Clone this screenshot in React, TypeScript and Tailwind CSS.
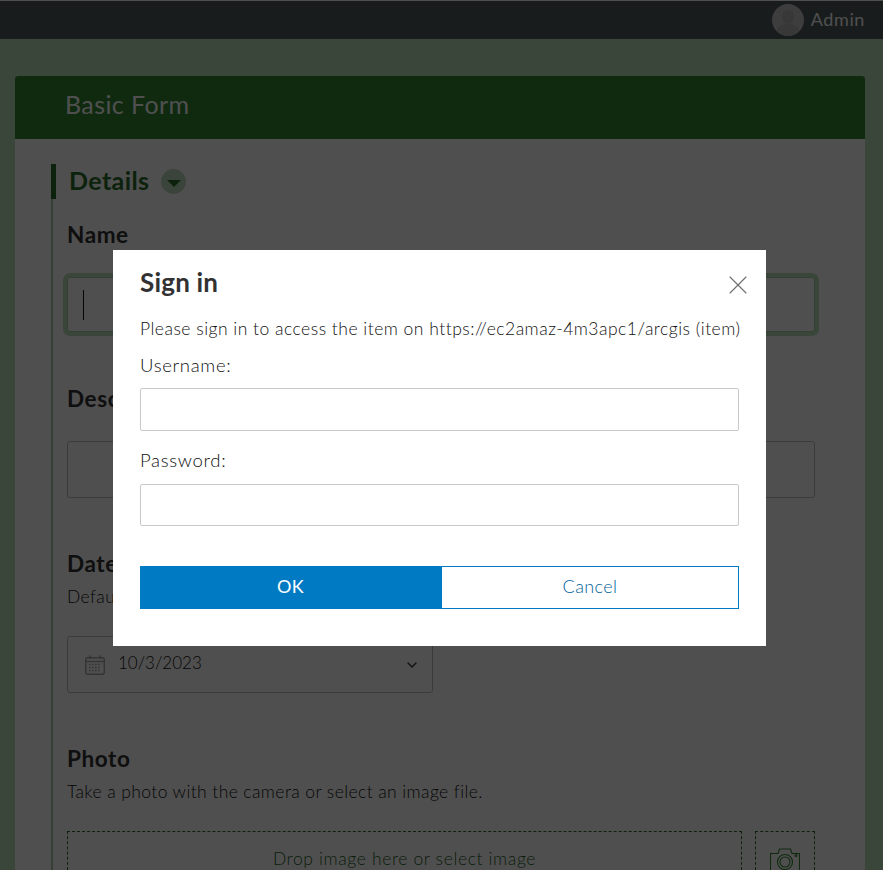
import { ChevronDown, X } from 'lucide-react';

const font = { fontFamily: 'Lato, "Open Sans", sans-serif' };

const CalendarIcon = () => (
  <svg width="20" height="20" viewBox="0 0 20 20" fill="none" className="text-[#a8a8a8]">
    <rect x="0.700" y="2.700" width="18.600" height="16.600" rx="2" stroke="currentColor" strokeWidth="1.400" />
    <path d="M.7 6.500h18.600" stroke="currentColor" strokeWidth="1.400" />
    <path d="M5 .5v3M15 .5v3" stroke="currentColor" strokeWidth="1.600" />
    <path d="M4 9.500h12M4 12.500h12M4 15.500h12" stroke="currentColor" strokeWidth="1.600" strokeDasharray="1.600 1.400" />
  </svg>
);

const CameraIcon = () => (
  <svg width="30" height="30" viewBox="0 0 30 30" fill="none" stroke="#308730" strokeWidth="1.100">
    <path d="M.5 30V5.500h7.500l1.500-4.500h11l1.500 4.500h7.500V30" />
    <circle cx="15" cy="14" r="7.500" />
    <circle cx="15" cy="14" r="5" />
    <circle cx="26" cy="7.500" r="1" />
  </svg>
);

const App = () => {
  return (
    <div className="relative h-[870px] w-[883px] overflow-hidden bg-[#bbe2bb] tracking-[0.4px]" style={font}>
      <header className="flex h-[39px] items-center justify-end border-t border-t-white bg-[#4d5a5a] pr-[18px]">
        <div className="flex items-center gap-[7px]">
          <div className="relative h-8 w-8 overflow-hidden rounded-full bg-[#c4c4c4]">
            <div className="absolute left-[10px] top-[6px] h-[14px] w-3 rounded-full bg-[#b4b4b4]" />
            <div className="absolute left-[4px] top-[20px] h-5 w-6 rounded-full bg-[#b4b4b4]" />
          </div>
          <span className="mb-[2px] text-[18px] tracking-[0.6px] text-white">Admin</span>
        </div>
      </header>

      <main className="pl-[15px] pr-[18px] pt-[37px]">
        <div className="overflow-hidden rounded-t-[3px] bg-white">
          <div className="flex h-[63px] items-center bg-[#308730] pb-[6px] pl-[50px] text-[25px] tracking-[0.4px] text-white">Basic Form</div>
          <div className="pl-[36px] pr-[50px] pt-[25px]">
            <div className="flex h-[35px] items-center border-l-[5px] border-l-[#2a6f2a] pl-[13px]">
              <span className="mb-[2px] text-[25px] font-bold leading-none tracking-[0.4px] text-[#2a6f2a]">Details</span>
              <span className="ml-[12px] flex h-[25px] w-[25px] items-center justify-center rounded-full bg-[#bcdcbc]">
                <span className="mt-[3px] h-0 w-0 border-x-[7px] border-t-[7px] border-x-transparent border-t-[#2a6f2a]" />
              </span>
            </div>
            <div className="border-l-2 border-l-[#a9cfa9] pl-[14px] pt-[21px]">
              <div className="text-[22.500px] font-bold leading-[30px] tracking-[0.6px] text-[#323232]">Name</div>
              <div className="mt-[27px] flex h-[55px] items-center rounded-[3px] border border-[#a9cfa9] bg-white pl-[15px] shadow-[0_0_0_4px_#bbe2bb]">
                <div className="h-[30px] w-px bg-[#111]" />
              </div>
              <div className="mt-[52px] text-[22.500px] font-bold leading-[30px] tracking-[0.6px] text-[#323232]">Description</div>
              <div className="mt-[27px] h-[57px] rounded-[3px] border border-[#bdbdbd]" />
              <div className="mt-[51px] text-[22.500px] font-bold leading-[30px] tracking-[0.6px] text-[#323232]">Date</div>
              <div className="mt-[6px] text-[17.500px] font-light leading-6 text-[#111]">Default</div>
              <div className="mt-[27px] flex h-[57px] w-[366px] items-center rounded-[3px] border border-[#bdbdbd] pl-[17px] pr-[12px]">
                <CalendarIcon />
                <span className="mb-[3px] ml-[13px] flex-1 text-[17px] font-light tracking-normal text-[#111]">10/3/2023</span>
                <ChevronDown className="h-[16px] w-[16px] text-[#323232]" />
              </div>
              <div className="mt-[51px] text-[22.500px] font-bold leading-[30px] tracking-[0.6px] text-[#323232]">Photo</div>
              <div className="mt-[6px] text-[17.500px] font-light leading-6 text-[#111]">Take a photo with the camera or select an image file.</div>
              <div className="mt-[27px] flex gap-[13px]">
                <div className="flex h-[70px] flex-1 justify-center border border-dashed border-[#2a6f2a] pt-[15px] text-[17.500px] font-light leading-6 tracking-[0.63px] text-[#1f5f1f]">
                  Drop image here or select image
                </div>
                <div className="flex h-[70px] w-[60px] justify-center border border-dashed border-[#2a6f2a] pt-[16px]">
                  <CameraIcon />
                </div>
              </div>
            </div>
          </div>
        </div>
      </main>

      <div className="absolute inset-0 bg-black/[.69] pl-[113px] pt-[250px]">
        <div className="h-[396px] w-[653px] bg-white px-[27px] pt-[14px]">
          <div className="flex items-start justify-between">
            <h2 className="text-[26px] font-bold leading-[36px] tracking-[0.2px] text-[#323232]">Sign in</h2>
            <X className="mr-[-15px] mt-[5px] h-8 w-8 text-[#6e6e6e]" strokeWidth={0.85} />
          </div>
          <p className="mt-[16px] whitespace-nowrap text-[17.500px] font-light leading-6 tracking-[0.49px] text-[#111]">
            Please sign in to access the item on https://ec2amaz-4m3apc1/arcgis (item)
          </p>
          <label className="mt-[12px] block text-[18.500px] font-light leading-6 tracking-[0.7px] text-[#111]">Username:</label>
          <input className="mt-[11px] block h-[43px] w-[599px] rounded-[2px] border border-[#c9c9c9] bg-white" />
          <label className="mt-[17px] block text-[18.500px] font-light leading-6 tracking-[0.7px] text-[#111]">Password:</label>
          <input className="mt-[12px] block h-[42px] w-[599px] rounded-[2px] border border-[#c9c9c9] bg-white" />
          <div className="mt-[40px] flex w-[599px]">
            <button className="h-[43px] w-[301px] bg-[#007ac2] pb-[2px] text-[18px] text-white">OK</button>
            <button className="h-[43px] flex-1 border border-[#007ac2] bg-white pb-[2px] text-[18px] font-light text-[#00619b]">Cancel</button>
          </div>
        </div>
      </div>
    </div>
  );
};

export default App;
